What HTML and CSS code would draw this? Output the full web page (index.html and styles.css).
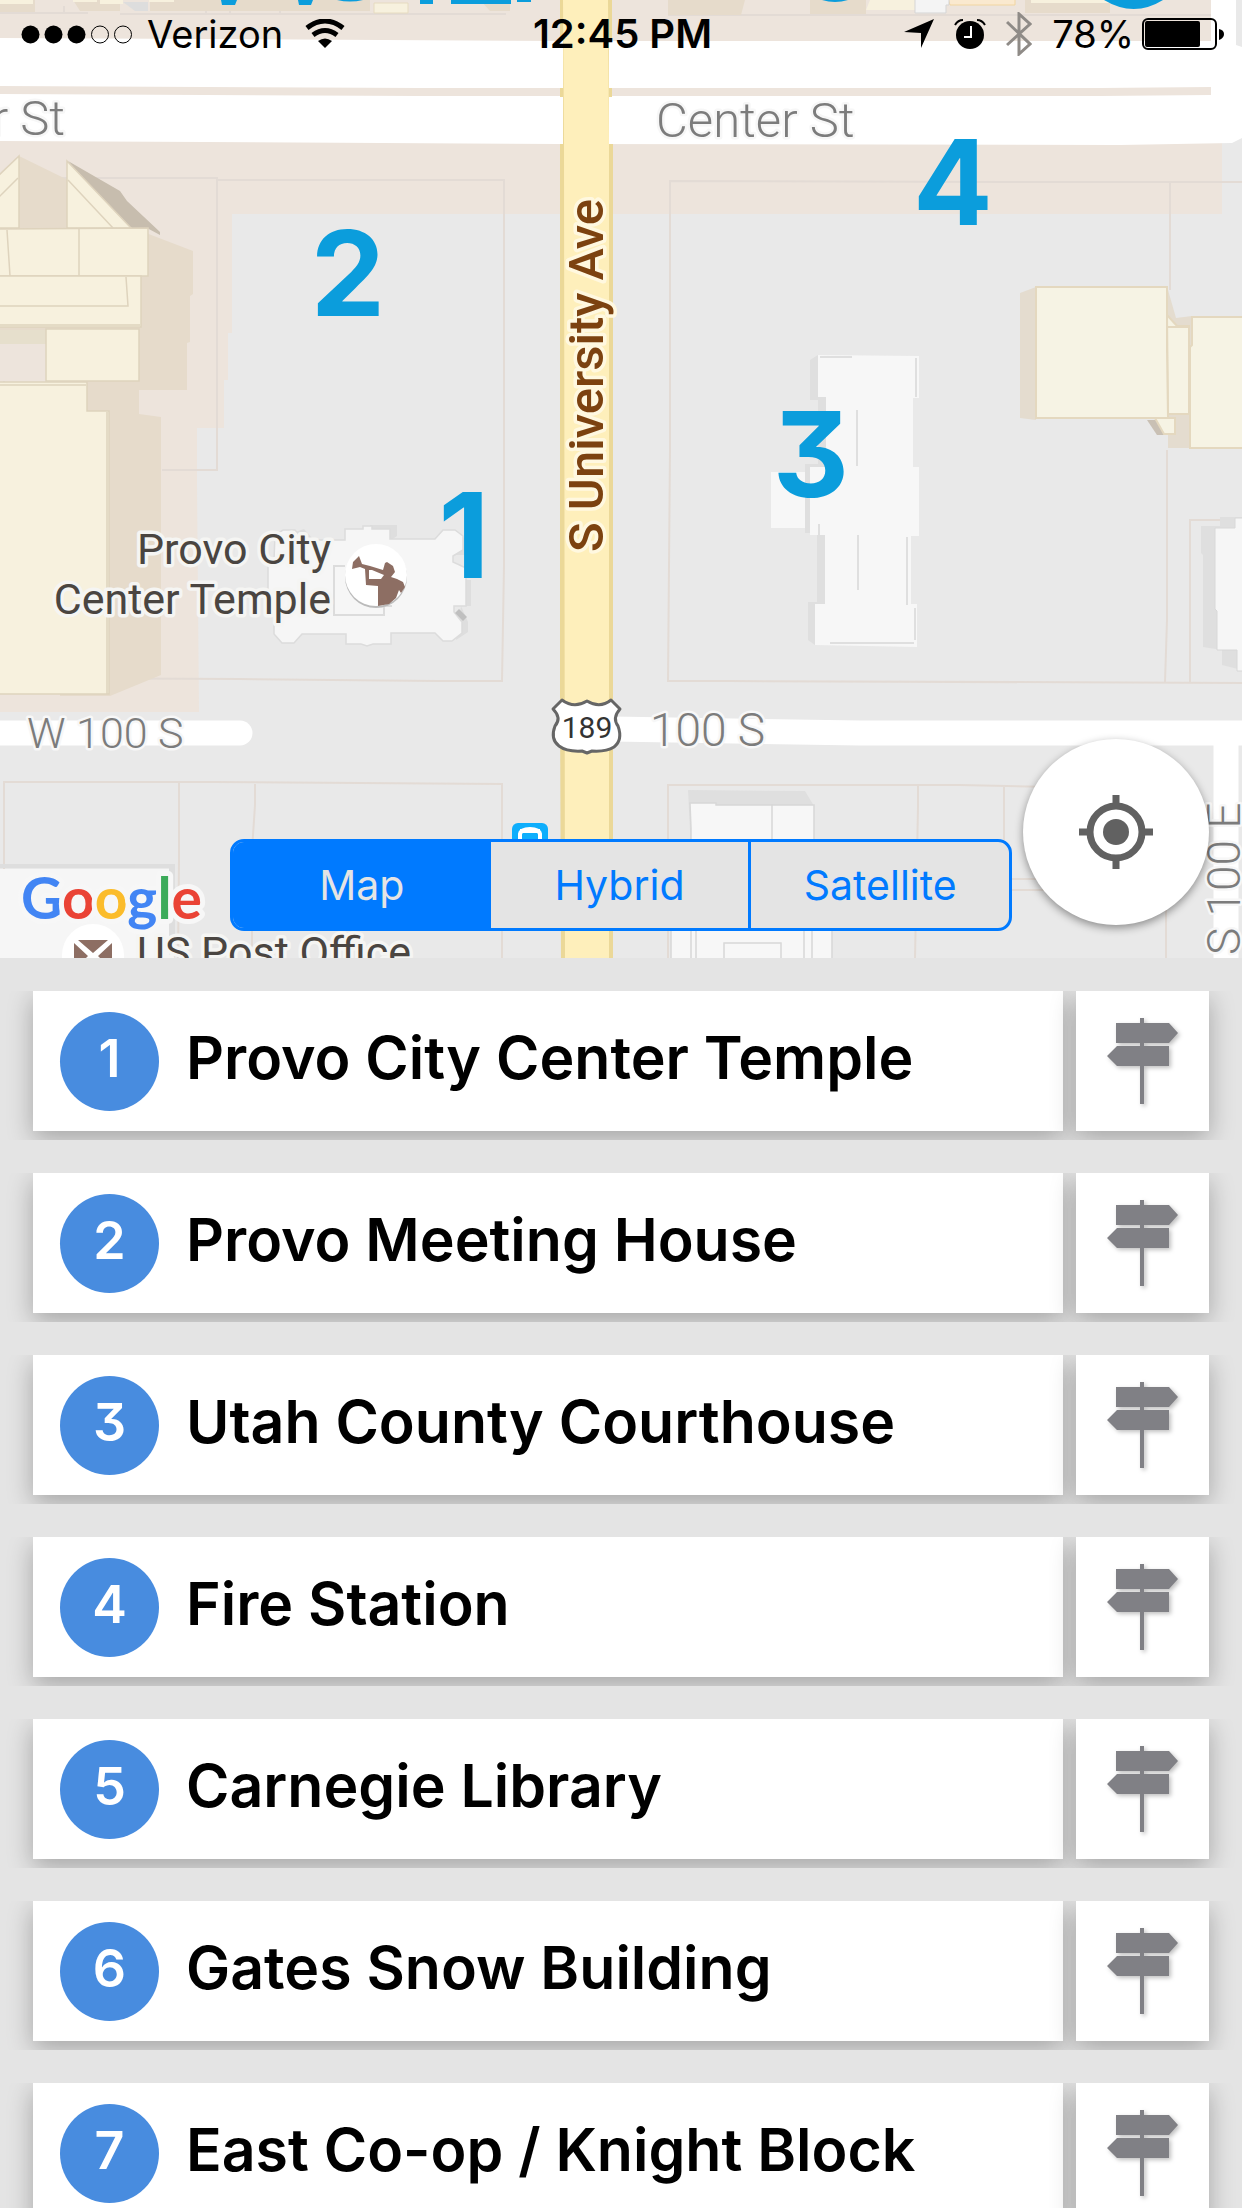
FILE: index.html
```html
<!DOCTYPE html>
<html lang="en">
<head>
    <meta charset="UTF-8">
    <meta name="viewport" content="width=device-width, initial-scale=1.0">
    <title>Provo Walking Tour</title>
    <link rel="stylesheet" href="styles.css">
</head>
<body>
    <!-- Shared icons -->
    <svg class="sprite" aria-hidden="true">
        <symbol id="signpost" viewBox="0 0 71 86">
            <path d="M33 0h4v5h25l9 10-9 10H37v3h25v20H37v38h-4V48H10L0 38l10-10h23v-3H9V5h24z"/>
        </symbol>
    </svg>

    <div class="app">
        <section class="map">
            <svg class="map-canvas" viewBox="0 0 1242 958" preserveAspectRatio="xMidYMid slice" role="img" aria-label="Map of downtown Provo">
                <rect width="1242" height="958" fill="#e9e9e9"/>

                <!-- Commercial area -->
                <path fill="#ede4dc" d="M0 0H1222V214H232V333H228V380H224V428H197V484L199 712H0z"/>
                <path fill="#e9e9e9" d="M1222 0h20v214h-20z"/>

                <!-- Lot lines -->
                <g fill="none" stroke="#e3dbd5" stroke-width="2">
                    <path d="M0 13H88M120 14H506M668 15H1211M64 6V13M206 0V13M230 0V13M280 0V13"/>
                    <path d="M4 178H217V470H162M217 180H504V566L502 681H437L240 679 4 678V178"/>
                    <path d="M1170 182V290M1167 450V620L1165 682M1003 182H1242M1003 182 670 181V450L668 681H730L1242 683M1190 683V520H1242"/>
                    <path d="M4 870V782H215L502 784V958M179 782V860L178 958M255 784V805L252 850V958M4 870V958"/>
                    <path d="M668 958V785H960L1050 787M918 785V807L915 958M1004 787V840M1012 879H1060M1012 890H1060M1166 900V958"/>
                </g>

                <!-- Buildings along the top edge -->
                <path fill="#e6dbcb" d="M0 0H35V12H0zM73 0H120V11H80zM150 0H370V11H150zM480 0H510V11H490zM668 0H745L741 15H668zM810 0H866V14H810zM1025 0H1110V13H1025z"/>
                <path fill="#f7f1de" d="M0 0H33V4H0zM73 0H97V2H73zM100 0H123V4H100zM149 0H174V2H149zM870 0H915V10H866zM1031 0H1110V3H1031z"/>
                <path fill="#fae9cf" stroke="#f2d5a0" d="M948 -2H1015V5H950z"/>
                <path fill="#f4f4f4" stroke="#d5d5d5" d="M915 -2H949V5H946V13H915z"/>
                <path fill="#ddd" d="M123 2H148V11H135z"/>
                <path fill="#f7f1de" stroke="#e6dbc0" d="M374 3H408V13H374z"/>

                <!-- Convention center -->
                <path fill="#e6dbcb" d="M19 156 68 180 146 233 193 251V294L190 296V342L187 343V390H139V414L161 417V675L110 696H60V360H0V228z"/>
                <path fill="#ede4dc" d="M0 344H46V381H0z"/>
                <path fill="#e6dfcc" d="M0 330H46V344H0z"/>
                <path fill="#c7bdae" d="M68 161 120 191 127 201 160 232V235L147 228H128z"/>
                <g fill="#f7f1de" stroke="#ded3bd" stroke-width="1.5">
                    <path d="M-2 176 19 156V228H-2z"/>
                    <path d="M67 161 131 228H67z"/>
                    <path d="M-2 229 148 228V276H-2z"/>
                    <path d="M-2 276H141V327H-2z"/>
                    <path d="M46 329H139V381H46z"/>
                    <path d="M-2 382H87V411H109V694H-2z"/>
                    <path fill="none" d="M-2 198 18 178M68 180 113 228M7 230 10 276M79 228V276M-2 306H128L126 277M-2 325H140M-2 385H86M107 412V694"/>
                </g>

                <!-- Temple -->
                <path fill="#dedede" d="M295 532 304 529 312 538V545H300zM370 525H397V536L391 540H370zM445 530H455L466 540V555H453zM460 580H471V606H460zM461 606 468 622V632L456 640z"/>
                <path fill="#f6f6f6" stroke="#dcdcdc" stroke-width="1.5" d="M275 535 283 530H295L303 540H345V529H363V526H372V529H390V539H435L443 530H455L463 536V550L453 556V562L466 568V606H454V612L462 622V633L452 641H443L435 633H391V644H373L367 646 361 644H346V634H302L294 643H282L274 634V615L268 612V565L274 560z"/>
                <path fill="none" stroke="#dcdcdc" stroke-width="2" d="M345 566H334V615H384V606H392"/>
                <path fill="#bfbfbf" d="M459 609 467 617 463 621 455 613z"/>

                <!-- Courthouse -->
                <path fill="#dfdfdf" d="M818 355 810 360V400H818V464H805V533H817V602H808V640L815 645H830V355z"/>
                <path fill="#f7f7f7" d="M818 355 919 356V398H913V467H919V536H911V604H917V647L815 645V604H825V535H810V467H826V397H818zM771 472H805V528H771z"/>
                <path stroke="#dfdfdf" stroke-width="2" d="M820 357H852M916 358V397M857 410V466M858 535V590M907 537V605M915 608V640M830 643H914M819 524V535"/>

                <!-- Buildings on the east side -->
                <path fill="#e4dccf" d="M1020 293 1036 287V420L1020 418zM1168 290 1176 318 1192 316V448H1168z"/>
                <path fill="#c9c0b4" d="M1147 420 1157 435H1166L1158 420z"/>
                <g fill="#f6f3e4" stroke="#e4d8bf" stroke-width="2">
                    <path d="M1155 418H1175V434H1164z"/>
                    <path d="M1167 315 1177 326H1189V414H1168z"/>
                    <path d="M1036 287H1167V350L1168 418H1036z"/>
                    <path d="M1192 317H1244V448H1190V347L1192 345z"/>
                    <path d="M1167 327H1190"/>
                </g>
                <path fill="#dfdfdf" d="M1201 526H1220V517H1242V670L1222 665V650L1203 647V555L1201 553z"/>
                <path fill="#f6f6f6" stroke="#d8d8d8" d="M1215 528H1235V518H1244V671H1237V650H1217V611L1215 609z"/>

                <!-- Buildings south of 100 S -->
                <path fill="#dfdfdf" d="M688 790 805 791 814 806V850H691z"/>
                <path fill="#f7f7f7" stroke="#d8d8d8" stroke-width="1.5" d="M690 803H716V805H814V925H832V960H671V925H691V828z"/>
                <path fill="none" stroke="#d8d8d8" stroke-width="1.5" d="M772 804V850M691 925V960M696 925V960M804 925V960M812 925V960M724 960V943H781V960"/>
                <path fill="#dedede" d="M0 864H175V958H169V868H0z"/>
                <path fill="#f6f6f6" d="M0 869H169V958H0z"/>

                <!-- Streets -->
                <path fill="#fff" d="M0 38 560 41H1211V0H1236V45L1242 47V138L1232 143 1120 145 560 144 0 141z"/>
                <path fill="none" stroke="#ede4dc" stroke-width="8" d="M0 90 420 92H1100L1211 91"/>
                <g fill="none" stroke="#fff" stroke-width="25">
                    <path stroke-linecap="round" d="M-10 733H240"/>
                    <path d="M612 729 860 733H1242M1226 735V958"/>
                </g>
                <path fill="#ebd898" d="M560 0H612V41H609V88H612V97H609V144H613V958H561L560 700V144H563V97H560V88H563V41H560z"/>
                <path fill="#feefbb" d="M563 0H608L609 144V958H565L564 144z"/>

                <!-- Street names -->
                <g class="street">
                    <text x="65" y="135" font-size="49" text-anchor="end">Center St</text>
                    <text x="656" y="137" font-size="49">Center St</text>
                    <text x="27" y="748" font-size="43">W 100 S</text>
                    <text x="650" y="746" font-size="46">100 S</text>
                    <text font-size="46" transform="translate(1240 955) rotate(-90)">S 100 E</text>
                </g>
                <text class="avenue" font-size="49" transform="translate(603 552) rotate(-90)">S University Ave</text>

                <!-- US 189 shield -->
                <path fill="#fff" stroke="#666" stroke-width="3" stroke-linejoin="round" d="M562 700Q574 709 587 701Q600 709 611 700L620 709Q612 718 618 726Q623 740 614 747Q606 752 592 751L587 753 582 751Q567 752 559 746Q550 739 555 726Q562 718 553 709z"/>
                <text class="shield" x="587" y="738" font-size="30" text-anchor="middle">189</text>

                <!-- Places -->
                <g class="place">
                    <text x="331" y="564" font-size="43" text-anchor="end">Provo City</text>
                    <text x="331" y="614" font-size="43" text-anchor="end">Center Temple</text>
                    <text x="137" y="967" font-size="43">US Post Office</text>
                </g>
                <circle cx="376" cy="577" r="31" fill="#bbb"/>
                <circle cx="376" cy="575" r="31" fill="#fff"/>
                <path fill="#8d6e63" d="M352 569 353 562 359 556 362 564 370 566 383 570 385 563 387 562 393 566 395 572 391 577 397 579 403 582 405 587 401 593 399 590 396 598 389 604 378 606V586L366 585 365 569 360 567zM369 570V579H381L384 575 372 570z"/>
                <circle cx="93" cy="955" r="31" fill="#fff"/>
                <path fill="#8d6e63" d="M78 940H108L93 953zM74 943 88 956 74 970zM112 943 98 956 112 970zM90 958 93 960 96 958 108 970H78z"/>
                <rect x="512" y="823" width="36" height="36" rx="6" fill="#0eaefc"/>
                <path fill="none" stroke="#fff" stroke-width="4" d="M520 845V834Q521 829 530 829Q539 829 540 834V845M520 831H540"/>

                <!-- Tour stops -->
                <path fill="#0b9ddc" d="M221 0H237L235 5H222zM298 0H313L311 5H299zM337 0H363Q350 3 337 0zM420 0H433V4H420zM451 0H511V4H451zM517 0H531V2H517zM822 0H848Q835 4 822 0zM1104 0H1163Q1134 18 1104 0z"/>
                <g class="stop">
                    <text x="464" y="578">1</text>
                    <text x="348" y="316">2</text>
                    <text x="811" y="497">3</text>
                    <text x="953" y="225">4</text>
                </g>

                <text class="google" x="21" y="919" font-size="57"><tspan fill="#4285f4">G</tspan><tspan fill="#ea4335">o</tspan><tspan fill="#fbbc2b">o</tspan><tspan fill="#4285f4">g</tspan><tspan fill="#3cab5a">l</tspan><tspan fill="#ea4335">e</tspan></text>
            </svg>

            <!-- Status bar -->
            <div class="status-bar">
                <div class="status-left">
                    <svg width="112" height="19" viewBox="0 0 112 19" aria-hidden="true">
                        <circle cx="9.5" cy="9.5" r="9"/>
                        <circle cx="32.5" cy="9.5" r="9"/>
                        <circle cx="55.5" cy="9.5" r="9"/>
                        <circle cx="79" cy="9.5" r="8.5" fill="none" stroke="#000"/>
                        <circle cx="102" cy="9.5" r="8.5" fill="none" stroke="#000"/>
                    </svg>
                    <span>Verizon</span>
                    <svg class="wifi" width="40" height="30" viewBox="0 0 40 30" aria-hidden="true">
                        <g fill="none" stroke="#000" stroke-width="5">
                            <path d="M2 9Q20 -5 38 9"/>
                            <path d="M8 16Q20 7 32 16"/>
                        </g>
                        <path d="M13 22Q20 17 27 22L20 29z"/>
                    </svg>
                </div>
                <time class="status-time">12:45 PM</time>
                <div class="status-right">
                    <svg width="30" height="30" viewBox="0 0 30 30" aria-hidden="true">
                        <path d="M0 13 30 0 17 29V14z"/>
                    </svg>
                    <svg class="alarm" width="32" height="30" viewBox="0 0 32 30" aria-hidden="true">
                        <circle cx="16" cy="16" r="14"/>
                        <path fill="none" stroke="#000" stroke-width="2" d="M1 6Q4 1 9 1M23 1Q28 1 31 6"/>
                        <path fill="none" stroke="#fff" stroke-width="2" d="M17 7V18H10"/>
                    </svg>
                    <svg width="26" height="44" viewBox="0 0 26 44" aria-hidden="true">
                        <path fill="none" stroke="#8f8b87" stroke-width="3" d="M1 10 24 32 13 42V2L24 12 1 33"/>
                    </svg>
                    <span class="percent">78%</span>
                    <svg width="82" height="32" viewBox="0 0 82 32" aria-hidden="true">
                        <rect x="1" y="1" width="73" height="30" rx="5" fill="none" stroke="#000" stroke-width="2"/>
                        <rect x="3" y="3" width="55" height="26" rx="2"/>
                        <path d="M77 11Q82 12 82 16Q82 20 77 22z"/>
                    </svg>
                </div>
            </div>

            <!-- Map controls -->
            <div class="map-type" role="group" aria-label="Map type">
                <button type="button" class="active" aria-pressed="true">Map</button>
                <button type="button" aria-pressed="false">Hybrid</button>
                <button type="button" aria-pressed="false">Satellite</button>
            </div>
            <button type="button" class="locate" aria-label="My location">
                <svg width="74" height="74" viewBox="0 0 74 74" aria-hidden="true">
                    <circle cx="37" cy="37" r="13" fill="#616161"/>
                    <circle cx="37" cy="37" r="26" fill="none" stroke="#616161" stroke-width="7"/>
                    <path stroke="#616161" stroke-width="7" d="M37 0V11M37 63V74M0 37H11M63 37H74"/>
                </svg>
            </button>
        </section>

        <!-- Stops list -->
        <ol class="stops">
            <li>
                <button type="button" class="card"><span class="badge">1</span><span class="name">Provo City Center Temple</span></button>
                <button type="button" class="directions" aria-label="Directions to Provo City Center Temple"><svg><use href="#signpost"/></svg></button>
            </li>
            <li>
                <button type="button" class="card"><span class="badge">2</span><span class="name">Provo Meeting House</span></button>
                <button type="button" class="directions" aria-label="Directions to Provo Meeting House"><svg><use href="#signpost"/></svg></button>
            </li>
            <li>
                <button type="button" class="card"><span class="badge">3</span><span class="name">Utah County Courthouse</span></button>
                <button type="button" class="directions" aria-label="Directions to Utah County Courthouse"><svg><use href="#signpost"/></svg></button>
            </li>
            <li>
                <button type="button" class="card"><span class="badge">4</span><span class="name">Fire Station</span></button>
                <button type="button" class="directions" aria-label="Directions to Fire Station"><svg><use href="#signpost"/></svg></button>
            </li>
            <li>
                <button type="button" class="card"><span class="badge">5</span><span class="name">Carnegie Library</span></button>
                <button type="button" class="directions" aria-label="Directions to Carnegie Library"><svg><use href="#signpost"/></svg></button>
            </li>
            <li>
                <button type="button" class="card"><span class="badge">6</span><span class="name">Gates Snow Building</span></button>
                <button type="button" class="directions" aria-label="Directions to Gates Snow Building"><svg><use href="#signpost"/></svg></button>
            </li>
            <li>
                <button type="button" class="card"><span class="badge">7</span><span class="name">East Co-op / Knight Block</span></button>
                <button type="button" class="directions" aria-label="Directions to East Co-op / Knight Block"><svg><use href="#signpost"/></svg></button>
            </li>
        </ol>
    </div>
</body>
</html>
```
FILE: styles.css
```css
* {
    margin: 0;
    padding: 0;
    box-sizing: border-box;
}

body {
    font-family: Inter, "Liberation Sans", sans-serif;
    background: #e4e4e4;
    color: #000;
}

button {
    border: none;
    background: none;
    font: inherit;
    color: inherit;
    cursor: pointer;
}

svg {
    display: block;
    flex-shrink: 0;
}

.sprite {
    position: absolute;
    width: 0;
    height: 0;
}

.app {
    display: flex;
    flex-direction: column;
    height: 100vh;
}

/* Map */
.map {
    position: relative;
    flex-shrink: 0;
    overflow: hidden;
}

.map-canvas {
    width: 100%;
    height: 958px;
}

.map-canvas text {
    font-family: Roboto, "Liberation Sans", sans-serif;
    stroke-linejoin: round;
    paint-order: stroke;
}

.street text {
    font-weight: 300;
    fill: #7c7c7c;
    stroke: #f7f7f7;
    stroke-width: 5px;
}

.map-canvas .avenue {
    font-weight: 500;
    fill: #7c4210;
    stroke: #fff8e0;
    stroke-width: 7px;
}

.map-canvas .shield {
    fill: #333;
}

.place text {
    fill: #4a4541;
    stroke: #f5f5f3;
    stroke-width: 7px;
}

.map-canvas .stop text {
    font-family: Inter, "Liberation Sans", sans-serif;
    font-size: 118px;
    font-weight: 700;
    font-feature-settings: "cv09";
    fill: #0b9ddc;
    text-anchor: middle;
}

.map-canvas .google {
    font-family: Lato, "Liberation Sans", sans-serif;
    font-weight: 700;
    stroke: #f7f7f7;
    stroke-width: 10px;
}

/* Status bar */
.status-bar {
    position: absolute;
    top: 0;
    left: 0;
    right: 0;
    display: grid;
    grid-template-columns: 1fr auto 1fr;
    align-items: center;
    height: 68px;
    padding: 0 18px 0 21px;
    font-size: 38px;
    line-height: 44px;
}

.status-left,
.status-right {
    display: flex;
    align-items: center;
}

.status-left {
    gap: 14px;
}

.status-left .wifi {
    margin-left: 8px;
}

.status-time {
    font-size: 40px;
    font-weight: 600;
}

.status-right {
    justify-content: flex-end;
    gap: 20px;
}

.status-right .percent {
    margin-right: -12px;
}

/* Map type control */
.map-type {
    position: absolute;
    bottom: 27px;
    left: 50%;
    display: flex;
    width: 782px;
    height: 92px;
    border: 3px solid #007aff;
    border-radius: 14px;
    background: #e4e4e4;
    overflow: hidden;
    transform: translateX(-50%);
}

.map-type button {
    flex: 1 1 0;
    font-size: 41px;
    line-height: 50px;
    color: #007aff;
}

.map-type button:last-child {
    border-left: 3px solid #007aff;
}

.map-type .active {
    background: #007aff;
    color: #e4e4e4;
}

.locate {
    position: absolute;
    right: 33px;
    bottom: 33px;
    display: flex;
    align-items: center;
    justify-content: center;
    width: 186px;
    height: 186px;
    border-radius: 50%;
    background: #fff;
    box-shadow: 0 3px 8px rgba(0, 0, 0, 0.4);
}

/* Stops list */
.stops {
    flex: 1;
    min-height: 0;
    overflow-y: auto;
    scrollbar-width: none;
    list-style: none;
}

.stops li {
    display: flex;
    gap: 13px;
    margin-top: 33px;
    padding: 0 33px 9px;
    overflow: hidden;
}

.card,
.directions {
    display: flex;
    align-items: center;
    height: 140px;
    background: #fff;
    box-shadow: 0 8px 24px rgba(0, 0, 0, 0.28);
}

.card {
    flex: 1;
    gap: 27px;
    padding: 0 27px;
    text-align: left;
}

.badge {
    flex-shrink: 0;
    width: 99px;
    height: 99px;
    border-radius: 50%;
    background: #488cdf;
    color: #fff;
    font-size: 52px;
    font-weight: 600;
    line-height: 94px;
    text-align: center;
    font-feature-settings: "cv09";
}

.name {
    padding-bottom: 6px;
    font-size: 59px;
    font-weight: 600;
    line-height: 68px;
}

.directions {
    justify-content: center;
    width: 133px;
}

.directions svg {
    width: 71px;
    height: 86px;
    fill: #808085;
    filter: drop-shadow(2px 2px 2px rgba(0, 0, 0, 0.25));
}
```
